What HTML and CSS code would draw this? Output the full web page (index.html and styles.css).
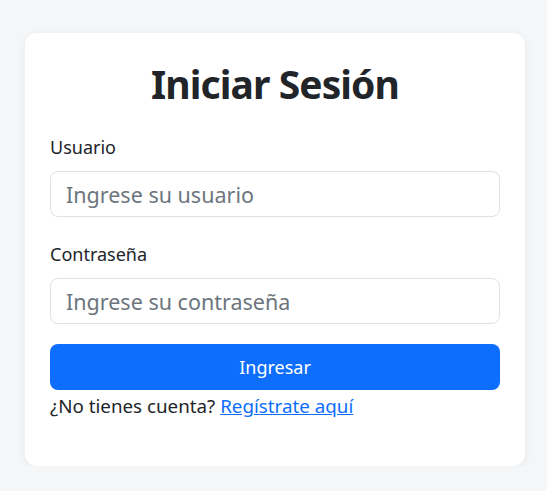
FILE: index.html
```html
<!DOCTYPE html>
<html lang="es">
<head>
<meta charset="utf-8">
<title>Iniciar Sesión</title>
<link rel="stylesheet" href="styles.css">
</head>
<body>
<main class="page">
  <form class="card">
    <h1 class="title">Iniciar Sesión</h1>
    <div class="field">
      <label class="label" for="user">Usuario</label>
      <input class="input" id="user" type="text" placeholder="Ingrese su usuario">
    </div>
    <div class="field">
      <label class="label" for="pass">Contraseña</label>
      <input class="input" id="pass" type="password" placeholder="Ingrese su contraseña">
    </div>
    <button class="btn" type="button">Ingresar</button>
    <p class="note">¿No tienes cuenta? <a href="#" class="link">Regístrate aquí</a></p>
  </form>
</main>
</body>
</html>
```
FILE: styles.css
```css
* { box-sizing: border-box; }
html, body { margin: 0; padding: 0; }
body {
  background: #f5f6f8;
  font-family: "Noto Sans", "Open Sans", sans-serif;
  color: #212529;
  font-size: 18px;
  line-height: 1.5;
}
.page {
  padding: 33px 0 0 25px;
}
.card {
  width: 500px;
  background: #fff;
  border-radius: 12px;
  box-shadow: 0 2px 10px rgba(0, 0, 0, 0.06);
  padding: 24px 25px 30px;
  display: flex;
  flex-direction: column;
}
.title {
  margin: 0 0 23px;
  text-align: center;
  font-size: 39px;
  line-height: 54px;
  font-weight: 700;
  letter-spacing: -0.9px;
}
.field {
  display: flex;
  flex-direction: column;
  margin-bottom: 24px;
}
.field + .field { margin-bottom: 20px; }
.label {
  line-height: 27px;
  margin-bottom: 10px;
}
.input {
  height: 46px;
  border: 1px solid #dee2e6;
  border-radius: 8px;
  padding: 0 15px;
  font-family: inherit;
  font-size: 21.5px;
  color: #212529;
  outline: none;
}
.input::placeholder { color: #6c757d; }
.btn {
  height: 46px;
  border: 0;
  border-radius: 8px;
  background: #0d6efd;
  color: #fff;
  font: inherit;
  cursor: pointer;
}
.note {
  margin: 3px 0 16px;
  line-height: 27px;
  font-size: 18.8px;
}
.link { color: #0d6efd; }
```
